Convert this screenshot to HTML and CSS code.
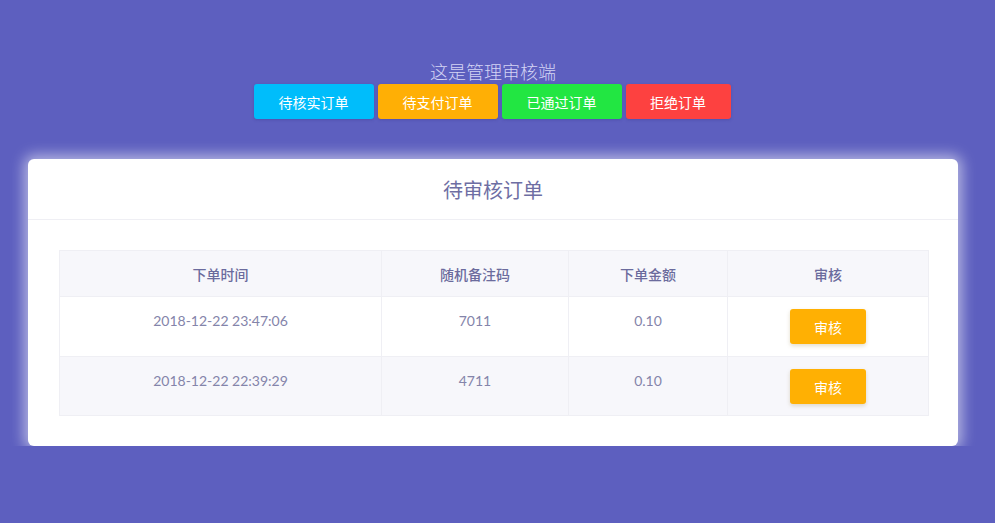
FILE: index.html
```html
<!DOCTYPE html>
<html lang="zh-CN">
<head>
<meta charset="utf-8">
<title>管理审核端</title>
<link rel="stylesheet" href="styles.css">
</head>
<body>
<div class="page">
  <div class="top">
    <div class="site-title">这是管理审核端</div>
    <div class="nav">
      <a class="nav-btn blue">待核实订单</a>
      <a class="nav-btn orange">待支付订单</a>
      <a class="nav-btn green">已通过订单</a>
      <a class="nav-btn red short">拒绝订单</a>
    </div>
  </div>
  <div class="card">
    <div class="card-head">待审核订单</div>
    <div class="card-body">
      <table class="orders">
        <colgroup>
          <col class="c1"><col class="c2"><col class="c3"><col class="c4">
        </colgroup>
        <thead>
          <tr><th>下单时间</th><th>随机备注码</th><th>下单金额</th><th>审核</th></tr>
        </thead>
        <tbody>
          <tr>
            <td>2018-12-22 23:47:06</td>
            <td>7011</td>
            <td>0.10</td>
            <td class="act"><button class="audit">审核</button></td>
          </tr>
          <tr class="alt last">
            <td>2018-12-22 22:39:29</td>
            <td>4711</td>
            <td>0.10</td>
            <td class="act"><button class="audit">审核</button></td>
          </tr>
        </tbody>
      </table>
    </div>
  </div>
</div>
</body>
</html>
```
FILE: styles.css
```css
html, body {
  margin: 0;
  padding: 0;
  background: #5d5fbf;
  font-family: Lato, "Noto Sans CJK SC", sans-serif;
}
.page {
  width: 930px;
  margin-left: 28px;
  padding-top: 61px;
}
.top {
  display: flex;
  flex-direction: column;
  align-items: center;
}
.site-title {
  color: #d4d4f4;
  font-size: 18px;
  font-weight: 300;
  line-height: 22px;
  margin-bottom: 1px;
}
.nav {
  display: flex;
  gap: 4px;
  margin-right: 2px;
}
.nav-btn {
  display: flex;
  align-items: center;
  justify-content: center;
  width: 120px;
  height: 35px;
  border-radius: 3px;
  color: #fff;
  font-size: 14px;
  box-shadow: 0 1px 3px rgba(40, 40, 120, 0.25);
}
.nav-btn.short { width: 105px; }
.blue { background: #00bdfb; }
.orange { background: #ffaf05; }
.green { background: #22e642; }
.red { background: #fd4140; }
.card {
  margin-top: 40px;
  background: #fff;
  border-radius: 6px;
  box-shadow: 0 0 14px 4px rgba(255, 255, 255, 0.55);
}
.card-head {
  height: 60px;
  display: flex;
  align-items: center;
  justify-content: center;
  font-size: 20px;
  color: #6e6ea3;
  border-bottom: 1px solid #efeff4;
}
.card-body {
  padding: 30px 30px 30px 31px;
}
.orders {
  width: 869px;
  border-collapse: collapse;
  table-layout: fixed;
  font-size: 14px;
}
.c1 { width: 322px; }
.c2 { width: 187px; }
.c3 { width: 159px; }
.c4 { width: 201px; }
.orders th, .orders td {
  border: 1px solid #efeff4;
  text-align: center;
}
.orders th {
  height: 45px;
  background: #f7f7fb;
  color: #6b6b9d;
  font-weight: 500;
  padding: 0;
}
.orders td {
  height: 60px;
  box-sizing: border-box;
  padding: 12px 0 0;
  vertical-align: top;
  color: #8484aa;
  line-height: 24px;
}
.orders tr.last td { height: 59px; }
.orders tr.alt td { background: #f7f7fb; }
.orders td.act { padding-top: 12px; }
.audit {
  width: 76px;
  height: 35px;
  border: none;
  border-radius: 3px;
  background: #ffb003;
  color: #fff;
  font-family: Lato, "Noto Sans CJK SC", sans-serif;
  font-size: 14px;
  box-shadow: 0 2px 4px rgba(120, 90, 0, 0.2);
  cursor: pointer;
}
```
